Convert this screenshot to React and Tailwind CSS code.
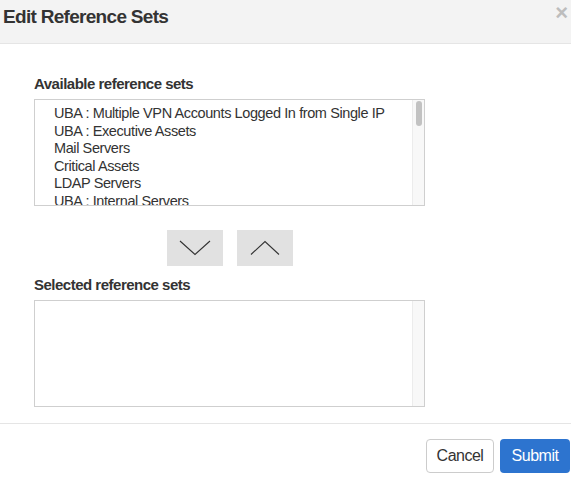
import React from 'react';

const available = [
  'UBA : Multiple VPN Accounts Logged In from Single IP',
  'UBA : Executive Assets',
  'Mail Servers',
  'Critical Assets',
  'LDAP Servers',
  'UBA : Internal Servers',
];

const Scrollbar = ({ thumb }) => (
  <div className="w-[12px] h-full bg-[#f8f8f8] border-l border-[#ececec] flex justify-center pt-[1px] shrink-0">
    {thumb && <div className="w-[6px] h-[25px] rounded-[3px] bg-[#c2c2c2]" />}
  </div>
);

const EditReferenceSets = () => {
  return (
    <div className="w-[571px] h-[478px] bg-white text-[#333] overflow-hidden font-['Liberation_Sans',Arial,sans-serif]">
      <div className="h-[44px] bg-[#f3f3f3] border-b border-[#e5e5e5] flex items-center justify-between pl-[3px] pr-[3px]">
        <h1 className="text-[19px] font-bold tracking-[-0.7px] leading-none -mt-[10px]">Edit Reference Sets</h1>
        <span className="text-[22px] font-bold text-[#bdbdbd] leading-none -mt-[18px]">×</span>
      </div>

      <div className="pl-[34px] pt-[30px]">
        <label className="block h-[20px] text-[15px] font-bold tracking-[-0.5px] leading-[20px] mb-[5px]">Available reference sets</label>
        <div className="w-[391px] h-[107px] border border-[#cfcfcf] flex overflow-hidden">
          <ul className="flex-1 min-w-0 pl-[19px] pt-[5px] text-[14.5px] tracking-[-0.4px] leading-[17.6px] overflow-hidden">
            {available.map(item => (
              <li key={item} className="whitespace-nowrap">{item}</li>
            ))}
          </ul>
          <Scrollbar thumb />
        </div>

        <div className="flex gap-[14px] pl-[133px] mt-[24px]">
          <button className="w-[56px] h-[36px] bg-[#e1e1e1] flex items-center justify-center">
            <svg width="32" height="16" viewBox="0 0 32 16" fill="none" stroke="#333" strokeWidth="1.1">
              <path d="M1 1 L16 14.5 L31 1" />
            </svg>
          </button>
          <button className="w-[56px] h-[36px] bg-[#e1e1e1] flex items-center justify-center">
            <svg width="30" height="16" viewBox="0 0 30 16" fill="none" stroke="#333" strokeWidth="1.1">
              <path d="M1 14.5 L15 1.5 L29 14.5" />
            </svg>
          </button>
        </div>

        <label className="block h-[20px] text-[15px] font-bold tracking-[-0.5px] leading-[20px] mt-[9px] mb-[5px]">Selected reference sets</label>
        <div className="w-[391px] h-[107px] border border-[#cfcfcf] flex justify-end">
          <Scrollbar />
        </div>
      </div>

      <div className="mt-[16px] border-t border-[#e5e5e5] flex justify-end gap-[6px] pt-[15px] pr-[1px]">
        <button className="h-[34px] w-[68px] border border-[#cccccc] rounded-[4px] bg-white text-[16px] tracking-[-0.5px] text-[#333]">Cancel</button>
        <button className="h-[34px] w-[70px] rounded-[4px] bg-[#2d74cf] text-[16px] tracking-[-0.5px] text-white">Submit</button>
      </div>
    </div>
  );
};

export default function App() {
  return <EditReferenceSets />;
}
